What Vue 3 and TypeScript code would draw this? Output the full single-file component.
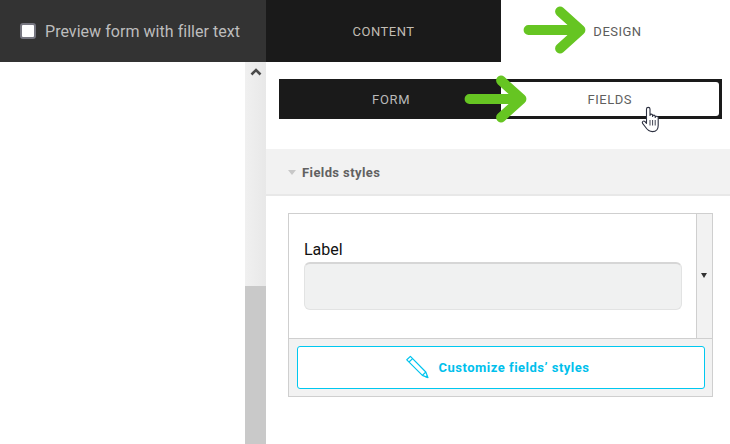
<script setup lang="ts">
const previewLabel: string = 'Preview form with filler text'
</script>

<template>
  <div class="page">
    <header class="topbar">
      <label class="preview">
        <span class="check"></span>
        <span>{{ previewLabel }}</span>
      </label>
      <div class="tab content-tab">CONTENT</div>
      <div class="tab design-tab">
        <svg class="arrow arrow-top" width="72" height="50" viewBox="0 0 72 50">
          <path d="M9.5 25H61.5M41 6.5L61.5 25L41 43.5" fill="none" stroke="#66c522" stroke-width="9.8" stroke-linecap="round" stroke-linejoin="round" />
        </svg>
        <span>DESIGN</span>
      </div>
    </header>
    <main class="body">
      <aside class="left">
        <div class="scrollbar">
          <div class="track">
            <svg class="up" width="12" height="8" viewBox="0 0 12 8">
              <path d="M1.5 6.5L6 2L10.5 6.5" fill="none" stroke="#4a4a4a" stroke-width="2.6" />
            </svg>
          </div>
          <div class="thumb"></div>
        </div>
      </aside>
      <section class="right">
        <div class="subtabs">
          <div class="subtab form-tab">FORM</div>
          <div class="subtab fields-tab">FIELDS</div>
          <svg class="arrow arrow-sub" width="72" height="50" viewBox="0 0 72 50">
            <path d="M9.5 25H61.5M41 6.5L61.5 25L41 43.5" fill="none" stroke="#66c522" stroke-width="9.8" stroke-linecap="round" stroke-linejoin="round" />
          </svg>
          <svg class="hand" width="20" height="27" viewBox="0 0 20 27">
            <path d="M5.5 15V3C5.5 0.8 9 0.8 9 3V9.5C9 7.6 11.6 7.6 11.6 9.5V10.5C11.6 8.7 14.2 8.7 14.2 10.5V11.4C14.2 9.8 17.2 9.8 17.2 11.6V19.5C17.2 23 15.8 25.6 11.5 25.6C7.5 25.6 6 23.4 4.4 21L1.6 17.4C0.6 15.8 2.6 14.2 4 15.6L5.5 17.4Z" fill="#fff" stroke="#2c3040" stroke-width="1.1" stroke-linejoin="round" />
            <path d="M9 14V19.5M11.6 14V19.5M14.2 14V19.5" fill="none" stroke="#2c3040" stroke-width="0.9" />
          </svg>
        </div>
        <div class="section-head">
          <span class="caret"></span>
          <span>Fields styles</span>
        </div>
        <div class="card">
          <div class="card-top">
            <div class="sample">
              <div class="label">Label</div>
              <div class="input"></div>
            </div>
            <div class="dropdown"><span class="down"></span></div>
          </div>
          <div class="card-bottom">
            <button class="customize" type="button">
              <svg width="24" height="24" viewBox="0 0 24 24">
                <path d="M5.4 1.4L1.8 4.8L17.4 20.4L23 22.6L20.8 17ZM7.6 3.6L4 7M17.4 20.4L20.8 17" fill="none" stroke="#00c4ee" stroke-width="1.2" stroke-linejoin="round" />
                <path d="M20 22L23 23L22 20Z" fill="#00c4ee" />
              </svg>
              <span>Customize fields’ styles</span>
            </button>
          </div>
        </div>
      </section>
    </main>
  </div>
</template>

<style>
html, body { margin: 0; background: #fff; overflow: hidden; }
</style>

<style scoped>
.page {
  width: 730px;
  height: 444px;
  display: flex;
  flex-direction: column;
  font-family: Roboto, "Liberation Sans", sans-serif;
  overflow: hidden;
}
.topbar { display: flex; height: 62px; flex: none; }
.preview {
  width: 266px;
  background: #333;
  color: #bdbdbd;
  font-size: 16px;
  letter-spacing: 0.04px;
  display: flex;
  align-items: center;
  gap: 9px;
  padding-left: 20px;
  box-sizing: border-box;
}
.check {
  width: 16px;
  height: 16px;
  box-sizing: border-box;
  background: #fff;
  border: 2px solid #767680;
  border-radius: 3px;
}
.tab {
  display: flex;
  align-items: center;
  justify-content: center;
  font-size: 13px;
  letter-spacing: 0.5px;
}
.content-tab { width: 235px; background: #1a1a1a; color: #c2bdb4; }
.design-tab { width: 229px; position: relative; color: #5c5c5c; padding-left: 4px; box-sizing: border-box; }
.arrow { position: absolute; }
.arrow-top { left: 18px; top: 5px; }
.body { display: flex; flex: 1; min-height: 0; }
.left { width: 266px; display: flex; justify-content: flex-end; }
.scrollbar { width: 21px; display: flex; flex-direction: column; }
.track {
  height: 224px;
  background: linear-gradient(90deg, #f0f0f0, #e8e8e8);
  display: flex;
  justify-content: center;
  padding-top: 6px;
  box-sizing: border-box;
}
.up { display: block; }
.thumb { flex: 1; background: #c9c9c9; }
.right { flex: 1; display: flex; flex-direction: column; }
.subtabs {
  position: relative;
  display: flex;
  height: 40px;
  margin: 17px 8px 30px 13px;
  background: #1a1a1a;
}
.subtab {
  flex: 1;
  display: flex;
  align-items: center;
  justify-content: center;
  font-size: 13px;
  letter-spacing: 0.5px;
  box-sizing: border-box;
}
.form-tab { color: #b9b9b9; padding-left: 3px; letter-spacing: 0.7px; }
.fields-tab {
  background: #fff;
  color: #5f5f5f;
  margin: 3px 3px 3px 0;
  border-radius: 0 3px 3px 0;
}
.arrow-sub { left: 181px; top: -5px; }
.hand { position: absolute; left: 362px; top: 27px; }
.section-head {
  height: 47px;
  box-sizing: border-box;
  background: #f2f2f2;
  border-bottom: 2px solid #e8e8e8;
  display: flex;
  align-items: center;
  padding: 1px 0 0 22px;
  gap: 6px;
  color: #616161;
  font-size: 13px;
  letter-spacing: 0.4px;
  font-weight: 700;
}
.caret {
  width: 0;
  height: 0;
  border-left: 4px solid transparent;
  border-right: 4px solid transparent;
  border-top: 5px solid #c8c8c8;
}
.card {
  margin: 17px 17px 0 22px;
  height: 184px;
  box-sizing: border-box;
  border: 1px solid #cfcfcf;
  display: flex;
  flex-direction: column;
}
.card-top { height: 125px; flex: none; display: flex; border-bottom: 1px solid #cfcfcf; box-sizing: border-box; }
.sample { flex: 1; padding: 26px 14px 0 15px; }
.label { color: #111; font-size: 16px; line-height: 19px; margin-bottom: 3px; }
.input {
  height: 48px;
  box-sizing: border-box;
  background: #f0f1f1;
  border: 1px solid #e2e3e3;
  border-top: 2px solid #d6d6d6;
  border-radius: 6px;
}
.dropdown {
  width: 16px;
  box-sizing: border-box;
  background: #f2f2f2;
  border-left: 1px solid #cfcfcf;
  display: flex;
  align-items: center;
  justify-content: center;
  padding: 0 1px 2px 0;
}
.down {
  width: 0;
  height: 0;
  border-left: 3.5px solid transparent;
  border-right: 3.5px solid transparent;
  border-top: 5px solid #333;
}
.card-bottom { flex: 1; background: #f2f2f2; padding: 7px 7px 7px 8px; display: flex; }
.customize {
  flex: 1;
  background: #fff;
  border: 1px solid #00c8f0;
  border-radius: 3px;
  color: #00c0ec;
  font-family: inherit;
  font-size: 13px;
  font-weight: 700;
  letter-spacing: 0.5px;
  display: flex;
  align-items: center;
  justify-content: center;
  gap: 9px;
  padding: 0 7px 1px 0;
}
</style>
